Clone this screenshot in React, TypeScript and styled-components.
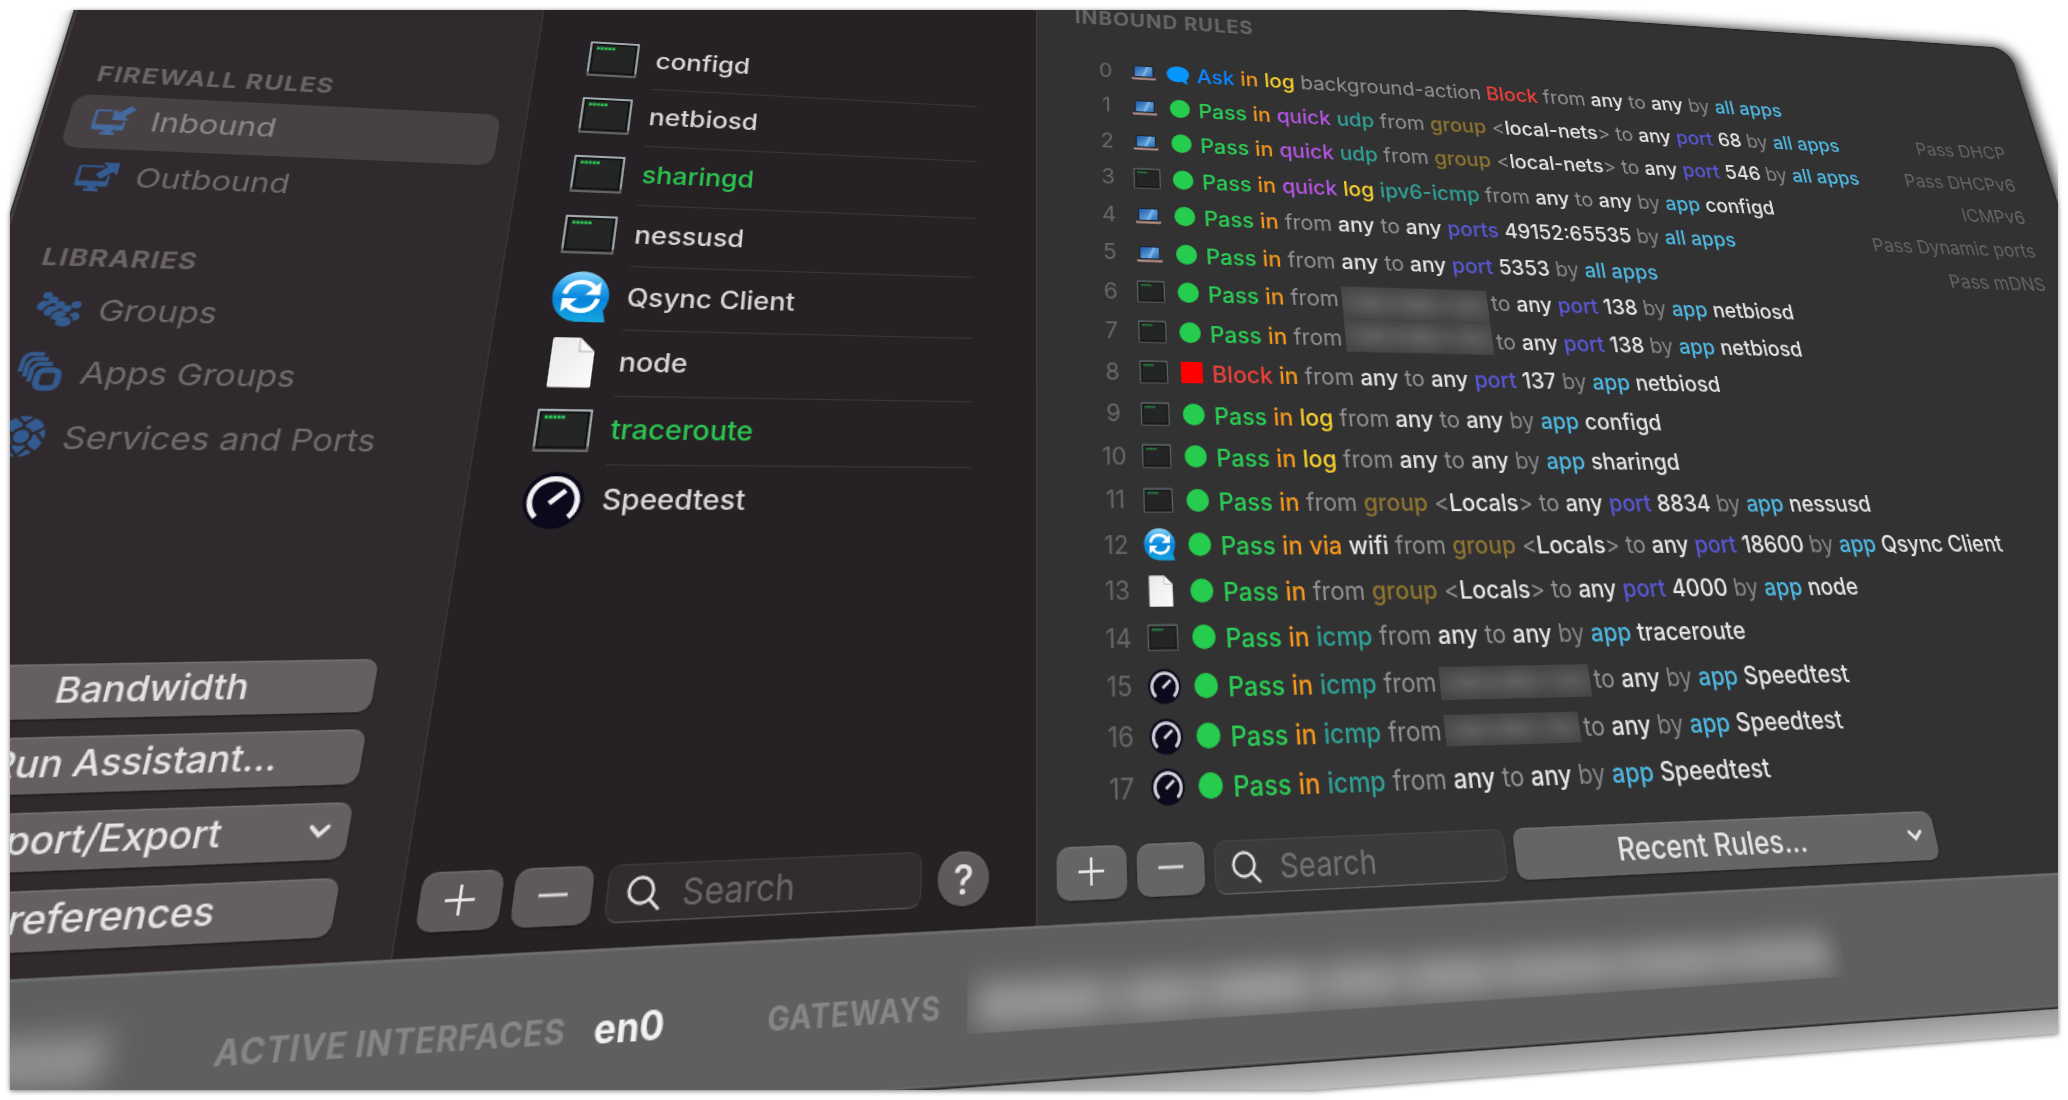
import React from "react";
import styled, { createGlobalStyle, css } from "styled-components";

const GlobalStyle = createGlobalStyle`
  html, body { margin: 0; padding: 0; background: #fff; }
  body { overflow: hidden; font-family: Inter, "Liberation Sans", sans-serif; }
  * { box-sizing: border-box; }
`;

const Page = styled.main`
  width: 2068px;
  height: 1100px;
  padding: 10px;
  background: #fff;
`;

const Lift = styled.div`
  width: 2048px;
  height: 1080px;
  filter: drop-shadow(0 1px 2.5px rgba(0, 0, 0, 0.55));
`;

const Crop = styled.div`
  width: 100%;
  height: 100%;
  overflow: hidden;
`;

/* The crop frame starts 10px in, so the projection is taken about the page origin. */
const Projection = styled.div`
  width: 1945px;
  height: 969px;
  transform-origin: 0 0;
  transform: translate(-10px, -10px)
    matrix3d(
      1.1338, 0.067545, 0, 0.000129149,
      -0.290805, 0.855574, 0, -0.0002807,
      0, 0, 1, 0,
      1036, -20, 0, 1
    )
    translate(-832px, 0);
  clip-path: inset(-40px -60px 0 -40px);
`;

const Window = styled.div`
  position: relative;
  display: flex;
  flex-direction: column;
  width: 1945px;
  height: 951px;
  border-radius: 24px 24px 0 0;
  overflow: hidden;
  background: #323232;
  &::after {
    content: "";
    position: absolute;
    inset: 0;
    border-radius: 24px 24px 0 0;
    box-shadow: inset 0 0 0 1.5px #262626, inset 2.5px -2.5px 0 0 rgba(140, 140, 140, 0.45);
  }
`;

const WindowShadow = styled.div`
  border-radius: 24px 24px 0 0;
  box-shadow: 7px -1px 17px rgba(0, 0, 0, 0.55);
`;

const Floor = styled.div`
  position: relative;
  height: 18px;
  margin-right: -60px;
  background: linear-gradient(#969696, #bdbdbd);
`;

const Body = styled.div`
  display: grid;
  grid-template-columns: 377.6px 454.4px 1fr;
  height: 848px;
`;

const Sidebar = styled.aside`
  display: flex;
  flex-direction: column;
  padding: 139.5px 20.6px 16.5px 21px;
  background: #30292d;
`;

const GroupTitle = styled.h2`
  margin: 0;
  padding: 0 0 2px 11.5px;
  height: 40px;
  line-height: 39px;
  font-size: 20.4px;
  font-weight: 700;
  letter-spacing: 0.95px;
  color: #6b6467;
`;

const NavGroup = styled.nav`
  display: flex;
  flex-direction: column;
  gap: 2px;
  margin-bottom: 26.3px;
`;

const NavItem = styled.a<{ $active?: boolean }>`
  display: flex;
  align-items: center;
  gap: 12.8px;
  height: 50px;
  padding: 0 0 2.5px 16.5px;
  border-radius: 12px;
  font-size: 24.9px;
  color: ${(p) => (p.$active ? "#8d878a" : "#716b6e")};
  background: ${(p) => (p.$active ? "#484144" : "transparent")};
  --cut: ${(p) => (p.$active ? "#484144" : "#30292d")};
  svg {
    flex: none;
    width: 33px;
    height: 33px;
    color: ${(p) => (p.$active ? "#456aa0" : "#335b8f")};
  }
`;

const SideActions = styled.div`
  display: flex;
  flex-direction: column;
  gap: 12px;
  margin: auto 20.8px 0 17px;
`;

const buttonFace = css<{ $tone?: "warm" | "mid" | "grey" }>`
  height: 38.5px;
  border: 0;
  border-radius: 9px;
  font-family: inherit;
  color: #e6e4e5;
  background: ${(p) => (p.$tone === "grey" ? "#656565" : p.$tone === "mid" ? "#5e595c" : "#655f62")};
  box-shadow: inset 0 1.2px 0 rgba(255, 255, 255, 0.1), 0 1px 1.5px rgba(0, 0, 0, 0.35);
`;

const WideButton = styled.button<{ $tone?: "warm" | "mid" | "grey"; $size?: number; $menu?: boolean }>`
  ${buttonFace}
  display: flex;
  align-items: center;
  padding: 0 ${(p) => (p.$menu ? 12 : 0)}px 0 0;
  height: 38px;
  font-size: ${(p) => p.$size ?? 24.8}px;
  font-weight: 500;
  span {
    flex: 1;
    text-align: center;
    padding: 0 ${(p) => (p.$menu ? 6 : 0)}px 1px 0;
  }
  svg {
    flex: none;
    width: 15px;
    height: 10px;
  }
`;

const RecentButton = styled(WideButton)`
  flex: 1;
  height: 39px;
`;

const SquareButton = styled.button<{ $tone?: "warm" | "mid" | "grey" }>`
  ${buttonFace}
  flex: none;
  display: grid;
  place-items: center;
  width: 54.6px;
  padding: 0;
  border-radius: 10px;
  svg {
    width: 22px;
    height: 22px;
    margin-top: -1px;
  }
`;

const RoundButton = styled(SquareButton)`
  width: 38.5px;
  margin: 0.8px 0 0 4px;
  border-radius: 50%;
  font-size: 29px;
  font-weight: 500;
`;

const Toolbar = styled.div<{ $side: "apps" | "rules" }>`
  display: flex;
  gap: 8px;
  margin-top: auto;
  padding: ${(p) => (p.$side === "apps" ? "0 36px 15.6px 12.5px" : "0 328px 15.4px 15px")};
`;

const SearchBox = styled.label<{ $grey?: boolean }>`
  flex: ${(p) => (p.$grey ? "0 0 244.5px" : "1")};
  display: flex;
  align-items: center;
  gap: 15px;
  height: 39px;
  margin-left: ${(p) => (p.$grey ? 0 : 1.8)}px;
  padding: 1px 0 0 13px;
  border-radius: 9px;
  border: 1px solid ${(p) => (p.$grey ? "#464646" : "#3f393c")};
  border-bottom-color: ${(p) => (p.$grey ? "#626262" : "#585255")};
  background: ${(p) => (p.$grey ? "#3b3b3b" : "#322b2f")};
  color: ${(p) => (p.$grey ? "#747474" : "#6c666a")};
  font-size: 24.3px;
  svg {
    width: 24px;
    height: 24px;
    color: #e4e2e3;
  }
`;

const AppsPanel = styled.section`
  display: flex;
  flex-direction: column;
  padding-top: 88.5px;
  border-left: 1.5px solid #3b3639;
  background: #262124;
`;

const AppList = styled.ul`
  list-style: none;
  margin: 0;
  padding: 0 56px 0 41.5px;
`;

const AppRow = styled.li<{ $live?: boolean }>`
  display: grid;
  grid-template-columns: 48px 1fr;
  column-gap: 13.4px;
  height: 58px;
  font-size: 22.9px;
  font-weight: 500;
  color: ${(p) => (p.$live ? "#2bc650" : "#dad8d9")};
`;

const AppIconCell = styled.span`
  display: grid;
  place-items: center;
  svg {
    width: 47px;
    height: 47px;
  }
`;

const AppName = styled.span`
  display: flex;
  align-items: center;
  border-bottom: 1.5px solid #3a3538;
  li:last-child > & {
    border-bottom-color: transparent;
  }
`;

const RulesPanel = styled.section`
  display: flex;
  flex-direction: column;
  border-left: 1.5px solid #414041;
  background: #323232;
`;

const RulesTitle = styled.h2`
  margin: 0;
  padding: 19.5px 0 0 37.5px;
  height: 79px;
  line-height: 40px;
  font-size: 21px;
  font-weight: 700;
  letter-spacing: 0.9px;
  color: #656565;
`;

const RuleList = styled.ol`
  list-style: none;
  margin: 0;
  padding: 0 47.5px 0 48.5px;
`;

const RuleRow = styled.li`
  display: grid;
  grid-template-columns: 38px 38px 31px 1fr auto;
  align-items: center;
  height: 38.53px;
  font-size: 21.4px;
  white-space: nowrap;
`;

const RuleNumber = styled.span`
  text-align: center;
  font-size: 21px;
  color: #686868;
`;

const RuleIcon = styled.span`
  display: grid;
  place-items: center;
  svg {
    width: 28px;
    height: 28px;
  }
`;

const Mark = styled.span<{ $kind: "pass" | "block" | "ask" }>`
  display: grid;
  place-items: center;
  justify-self: center;
  width: 20px;
  height: 20px;
  border-radius: ${(p) => (p.$kind === "pass" ? "50%" : "0")};
  background: ${(p) => (p.$kind === "pass" ? "#26cc4e" : p.$kind === "block" ? "#ff0000" : "transparent")};
  svg {
    width: 23px;
    height: 23px;
    margin-left: -2px;
  }
`;

const RuleText = styled.span`
  padding: 2px 0 0 3px;
`;

const inks: Record<string, string> = {
  A: "#0a84ff",
  P: "#2bcf55",
  B: "#ec413a",
  i: "#f7981d",
  l: "#f6cf2c",
  q: "#b455e2",
  t: "#2fa098",
  f: "#929296",
  g: "#8f7430",
  w: "#e6e6e6",
  o: "#5957d6",
  y: "#85858a",
  a: "#4fb8e3",
};

const Word = styled.span<{ $ink: string }>`
  color: ${(p) => inks[p.$ink]};
  font-weight: ${(p) => ("fy".includes(p.$ink) ? 400 : 500)};
`;

const Redacted = styled.span<{ $w: number; $h: number; $drop: number }>`
  display: inline-block;
  vertical-align: middle;
  width: ${(p) => p.$w}px;
  height: ${(p) => p.$h}px;
  margin: -8px 4px -8px 3px;
  transform: translateY(${(p) => p.$drop}px);
  background:
    radial-gradient(ellipse 24% 50% at 19% 50%, #5f5f5f, transparent),
    radial-gradient(ellipse 26% 50% at 51% 50%, #616161, transparent),
    radial-gradient(ellipse 22% 50% at 86% 50%, #5c5c5c, transparent),
    #474747;
`;

const Note = styled.span`
  font-size: 20.7px;
  color: #646464;
`;

const StatusBar = styled.footer`
  display: flex;
  align-items: center;
  height: 103px;
  border-top: 2px solid #6d6d6d;
  background: #5f5f5f;
  font-size: 21px;
`;

const StatusLabel = styled.span<{ $gap: number }>`
  margin: -2px 0 0 ${(p) => p.$gap}px;
  font-weight: 700;
  letter-spacing: 0.6px;
  color: #868686;
`;

const StatusValue = styled.span`
  margin: -3.5px 0 0 19px;
  font-size: 25px;
  font-weight: 700;
  color: #f2f2f2;
`;

const StatusBlur = styled.span<{ $w: number; $gap: number }>`
  display: flex;
  align-items: center;
  justify-content: ${(p) => (p.$gap ? "flex-start" : "flex-end")};
  width: ${(p) => p.$w}px;
  height: 58px;
  margin-left: ${(p) => p.$gap}px;
  margin-top: -26px;
  overflow: hidden;
  padding-top: 22px;
`;

const Smudge = styled.span<{ $w: number; $right?: number }>`
  flex: none;
  width: ${(p) => p.$w}px;
  height: 28px;
  margin-right: ${(p) => p.$right ?? 0}px;
  margin-left: 6px;
  filter: blur(10px);
  background: linear-gradient(
    90deg,
    #9a9a9a 0 12%,
    #848484 14% 15%,
    #999999 18% 22%,
    #878787 24%,
    #9e9e9e 28% 35%,
    #828282 37%,
    #989898 40% 45%,
    #868686 47%,
    #999999 50% 56%,
    #898989 58%,
    #969696 61% 70%,
    #8b8b8b 73%,
    #969696 77% 84%,
    #8c8c8c 86%,
    #969696 90%
  );
`;

const Plus = () => (
  <svg viewBox="0 0 22 22" fill="none" stroke="currentColor" strokeWidth="2">
    <path d="M11 1v20M1 11h20" />
  </svg>
);
const Minus = () => (
  <svg viewBox="0 0 22 22" fill="none" stroke="currentColor" strokeWidth="2">
    <path d="M1 10.500h20" />
  </svg>
);
const Lens = () => (
  <svg viewBox="0 0 24 24" fill="none" stroke="currentColor" strokeWidth="2.2" strokeLinecap="round">
    <circle cx="10" cy="10" r="8.6" />
    <path d="M16.5 16.5l6 6" />
  </svg>
);
const Chevron = () => (
  <svg viewBox="0 0 15 10" fill="none" stroke="currentColor" strokeWidth="2.8" strokeLinecap="round">
    <path d="M2 2l5.5 5.5L13 2" />
  </svg>
);

const Monitor = ({ out }: { out?: boolean }) => (
  <svg viewBox="0 0 33 33" fill="currentColor">
    <path
      d="M3 6.500h23v17.500a1.500 1.500 0 0 1-1.500 1.500h-7V27.500h2.500V30h-11v-2.500h2.500v-2H3A1.500 1.500 0 0 1 1.500 24V8a1.500 1.500 0 0 1 1.500-1.500zM3.800 8.300v12.200h20.400V8.300z"
      fillRule="evenodd"
    />
    {out ? (
      <path
        stroke="var(--cut)"
        strokeWidth="2.400"
        paintOrder="stroke"
        d="M18.500 3.500H31v11.500l-3.600-3.200-7.800 7-4.600-4.200 7.600-7.200z"
      />
    ) : (
      <path
        stroke="var(--cut)"
        strokeWidth="2.400"
        paintOrder="stroke"
        d="M27.500 2l4.300 3.800-7.300 6.200 4 4H15.500V5.500l4.200 3.600z"
      />
    )}
  </svg>
);

const GroupsIcon = () => (
  <svg viewBox="0 0 33 33" fill="currentColor">
    <ellipse cx="6.500" cy="5.800" rx="3.400" ry="3" />
    <ellipse cx="11.500" cy="9.600" rx="3.400" ry="3" />
    <ellipse cx="17" cy="13.500" rx="3.600" ry="3.200" />
    <ellipse cx="22.500" cy="16.500" rx="3.200" ry="3" />
    <ellipse cx="28.500" cy="13" rx="3.600" ry="3" />
    <path d="M1 16c0-3.800 2-5.800 5-5.800s3.600 1.200 4.400 3c-3 1-4 2.600-4.600 5.200-3-.2-4.800-1-4.800-2.400z" />
    <path d="M7 20.500c0-3.800 2-5.800 5-5.800s3.600 1.200 4.400 3c-3 1-4 2.600-4.600 5.200-3-.2-4.800-1-4.800-2.400z" />
    <path d="M13 24.500c0-3.800 2.200-6 5.500-6s4 1.500 4.800 3.200c-2.600.8-3.600 2-4 4.500-3.500 0-6.300-.3-6.300-1.700z" />
    <path d="M17 29c0-3.600 2.300-5.500 5.500-5.500S28 25.500 28 29c-1 1.600-2.800 2.400-5.500 2.400S18 30.600 17 29z" />
    <path d="M25.500 21.500c1-1.500 2.200-2.300 4-2.300 2.200 0 3.500 2 3.500 5-.8 1.500-2.200 2-4 2-.5-2-1.600-3.600-3.500-4.700z" />
  </svg>
);

const StackIcon = () => (
  <svg viewBox="0 0 33 33" fill="none" stroke="currentColor" strokeWidth="3.300">
    <path d="M2.800 17V8a5.500 5.500 0 0 1 5.500-5.500h8" />
    <path d="M6.600 21V12a5.500 5.500 0 0 1 5.500-5.500h8" />
    <path d="M10.400 25V16a5.500 5.500 0 0 1 5.500-5.500h8" />
    <rect x="15.500" y="15.500" width="14.500" height="14.500" rx="4.500" strokeWidth="4.600" />
  </svg>
);

const GlobeIcon = () => (
  <svg viewBox="0 0 33 33">
    <circle cx="16.500" cy="16.500" r="16" fill="currentColor" />
    <g fill="none" stroke="#30292d" strokeWidth="2.200">
      <circle cx="16.500" cy="16.500" r="6.400" />
      <path d="M16.500 10.100V6.500M22.600 14.700l3.400-1.500M20.400 21.600l2.200 3.200M12.600 21.600l-2.200 3.200M10.400 14.700L7 13.200" />
      <path d="M10 1l6.500 5.500L23 1M31.500 9L26 13.200l6 7M27.500 28.500l-4.900-3.700-6 7-6.200-7L5 29M1 20.500l6-7.300L2.500 7" />
    </g>
  </svg>
);

const ExecIcon = ({ small }: { small?: boolean }) => (
  <svg viewBox="0 0 47 47">
    <rect x="2" y="6" width="43" height="35.500" rx="1" fill={small ? "#677073" : "#a3adb1"} />
    <rect x="2" y="37.500" width="43" height="4" fill={small ? "#4c4c4c" : "#666"} />
    <rect x="3.800" y="8" width="39.400" height="31.600" fill="#101010" />
    <rect x="5.600" y="9.500" width="35.800" height="28" fill="#242625" />
    <path
      d="M8 12.800h16"
      stroke={small ? "#2a8a45" : "#2fc653"}
      strokeWidth="2.800"
      strokeDasharray="2.600 0.700"
    />
  </svg>
);

const SyncIcon = () => (
  <svg viewBox="0 0 47 47">
    <defs>
      <linearGradient id="sync" x1="0" y1="0" x2="0" y2="1">
        <stop offset="0" stopColor="#8fd6f8" />
        <stop offset=".3" stopColor="#2ba4ea" />
        <stop offset=".55" stopColor="#0583dc" />
        <stop offset="1" stopColor="#17a6e0" />
      </linearGradient>
    </defs>
    <path fill="url(#sync)" d="M23 .5c12.700 0 23 10 23 22.500 0 5-1.300 9-3.600 12.500L45 46H23C10 46 .5 35.500.5 23S10.300.5 23 .5z" />
    <g fill="none" stroke="#fff" strokeWidth="4">
      <path d="M10 21c1.500-7 6.500-11 13-11 5 0 8.500 2 11 5.500" />
      <path d="M37 25c-1.500 7-6.500 11-13 11-5 0-8.500-2-11-5.500" />
    </g>
    <path fill="#fff" d="M38.500 9.500v12H26.500zM8.500 37V25h12z" />
  </svg>
);

const DocIcon = () => (
  <svg viewBox="0 0 47 47">
    <defs>
      <linearGradient id="doc" x1="0" y1="0" x2="1" y2="1">
        <stop offset="0" stopColor="#e9e9e9" />
        <stop offset="1" stopColor="#fbfbfb" />
      </linearGradient>
    </defs>
    <path fill="url(#doc)" d="M8 2h20l12 12v30a1.500 1.500 0 0 1-1.500 1.500h-31A1.500 1.500 0 0 1 6 44V4a2 2 0 0 1 2-2z" />
    <path fill="#c9c9c9" d="M27 2v11.500a1.500 1.500 0 0 0 1.500 1.500H40z" />
    <path fill="#f6f6f6" d="M28.500 3v9a1.500 1.500 0 0 0 1.500 1.500h9z" />
  </svg>
);

const SpeedIcon = ({ small }: { small?: boolean }) => (
  <svg viewBox="0 0 47 47">
    <circle cx="23.500" cy="23.500" r="23" fill="#0b0a1d" />
    <g fill="none" stroke={small ? "#d4d4da" : "#f1f1f4"}>
      <path d="M11 37a18 18 0 1 1 25 0" strokeWidth="4.200" />
      <path d="M20.500 26l11.500-10.500" strokeWidth="4" />
    </g>
  </svg>
);

const LaptopIcon = () => (
  <svg viewBox="0 0 28 28">
    <defs>
      <linearGradient id="lap" x1="0" y1="0" x2="1" y2="1">
        <stop offset="0" stopColor="#1d5aa8" />
        <stop offset=".6" stopColor="#5a9ad6" />
        <stop offset="1" stopColor="#2a66ae" />
      </linearGradient>
    </defs>
    <rect x="4" y="7" width="20" height="13" rx="1.200" fill="#1b2430" />
    <rect x="5.200" y="8" width="17.600" height="11" fill="url(#lap)" />
    <path d="M17 8h3l-5 11h-3z" fill="#8fc0ea" opacity=".7" />
    <path d="M1.500 20.500h25l-1 2.200h-23z" fill="#b58f84" />
  </svg>
);

const BubbleIcon = () => (
  <svg viewBox="0 0 24 24">
    <path
      fill="#0795ff"
      d="M12 1.500C5.400 1.500.3 5.600.3 10.800S5.400 20 12 20c1.600 0 3-.2 4.300-.6 1.600 1.400 3.600 2.500 6 2.700-1-1.300-1.700-3-1.800-4.800 2-1.700 3.200-3.900 3.200-6.500C23.700 5.600 18.600 1.500 12 1.500z"
    />
  </svg>
);

type AppKind = "exec" | "sync" | "doc" | "speed" | "laptop";

const AppIcon = ({ kind, small }: { kind: AppKind; small?: boolean }) => {
  if (kind === "exec") return <ExecIcon small={small} />;
  if (kind === "sync") return <SyncIcon />;
  if (kind === "doc") return <DocIcon />;
  if (kind === "speed") return <SpeedIcon small={small} />;
  return <LaptopIcon />;
};

const apps: { name: string; kind: AppKind; live?: boolean }[] = [
  { name: "configd", kind: "exec" },
  { name: "netbiosd", kind: "exec" },
  { name: "sharingd", kind: "exec", live: true },
  { name: "nessusd", kind: "exec" },
  { name: "Qsync Client", kind: "sync" },
  { name: "node", kind: "doc" },
  { name: "traceroute", kind: "exec", live: true },
  { name: "Speedtest", kind: "speed" },
];

/* Rule text: "ink:words" segments split by "|", "+" glues to the next one;
   "#width,height,drop" stands for a redacted address. */
const rules: { kind: AppKind; mark: "ask" | "pass" | "block"; text: string; note?: string }[] = [
  { kind: "laptop", mark: "ask", text: "A:Ask|i:in|l:log|f:background-action|B:Block|f:from|w:any|f:to|w:any|y:by|a:all apps" },
  { kind: "laptop", mark: "pass", text: "P:Pass|i:in|q:quick|t:udp|f:from|g:group|f:<+|w:local-nets+|f:>|f:to|w:any|o:port|w:68|y:by|a:all apps", note: "Pass DHCP" },
  { kind: "laptop", mark: "pass", text: "P:Pass|i:in|q:quick|t:udp|f:from|g:group|f:<+|w:local-nets+|f:>|f:to|w:any|o:port|w:546|y:by|a:all apps", note: "Pass DHCPv6" },
  { kind: "exec", mark: "pass", text: "P:Pass|i:in|q:quick|l:log|t:ipv6-icmp|f:from|w:any|f:to|w:any|y:by|a:app|w:configd", note: "ICMPv6" },
  { kind: "laptop", mark: "pass", text: "P:Pass|i:in|f:from|w:any|f:to|w:any|o:ports|w:49152:65535|y:by|a:all apps", note: "Pass Dynamic ports" },
  { kind: "laptop", mark: "pass", text: "P:Pass|i:in|f:from|w:any|f:to|w:any|o:port|w:5353|y:by|a:all apps", note: "Pass mDNS" },
  { kind: "exec", mark: "pass", text: "P:Pass|i:in|f:from+|#146,33.4,1.7|f:to|w:any|o:port|w:138|y:by|a:app|w:netbiosd" },
  { kind: "exec", mark: "pass", text: "P:Pass|i:in|f:from+|#146,32,-4.3|f:to|w:any|o:port|w:138|y:by|a:app|w:netbiosd" },
  { kind: "exec", mark: "block", text: "B:Block|i:in|f:from|w:any|f:to|w:any|o:port|w:137|y:by|a:app|w:netbiosd" },
  { kind: "exec", mark: "pass", text: "P:Pass|i:in|l:log|f:from|w:any|f:to|w:any|y:by|a:app|w:configd" },
  { kind: "exec", mark: "pass", text: "P:Pass|i:in|l:log|f:from|w:any|f:to|w:any|y:by|a:app|w:sharingd" },
  { kind: "exec", mark: "pass", text: "P:Pass|i:in|f:from|g:group|f:<+|w:Locals+|f:>|f:to|w:any|o:port|w:8834|y:by|a:app|w:nessusd" },
  { kind: "sync", mark: "pass", text: "P:Pass|i:in|i:via|w:wifi|f:from|g:group|f:<+|w:Locals+|f:>|f:to|w:any|o:port|w:18600|y:by|a:app|w:Qsync Client" },
  { kind: "doc", mark: "pass", text: "P:Pass|i:in|f:from|g:group|f:<+|w:Locals+|f:>|f:to|w:any|o:port|w:4000|y:by|a:app|w:node" },
  { kind: "exec", mark: "pass", text: "P:Pass|i:in|t:icmp|f:from|w:any|f:to|w:any|y:by|a:app|w:traceroute" },
  { kind: "speed", mark: "pass", text: "P:Pass|i:in|t:icmp|f:from+|#138,27,-1|f:to|w:any|y:by|a:app|w:Speedtest" },
  { kind: "speed", mark: "pass", text: "P:Pass|i:in|t:icmp|f:from+|#122,25,-1|f:to|w:any|y:by|a:app|w:Speedtest" },
  { kind: "speed", mark: "pass", text: "P:Pass|i:in|t:icmp|f:from|w:any|f:to|w:any|y:by|a:app|w:Speedtest" },
];

const RuleSentence = ({ text }: { text: string }) => (
  <RuleText>
    {text.split("|").map((part, i) => {
      if (part[0] === "#") {
        const [w, h, drop] = part.slice(1).split(",").map(Number);
        return <Redacted key={i} $w={w} $h={h} $drop={drop} />;
      }
      const glued = part.endsWith("+");
      return (
        <React.Fragment key={i}>
          <Word $ink={part[0]}>{glued ? part.slice(2, -1) : part.slice(2)}</Word>
          {glued ? "" : " "}
        </React.Fragment>
      );
    })}
  </RuleText>
);

export default function App() {
  return (
    <Page>
      <GlobalStyle />
      <Lift>
        <Crop>
          <Projection>
            <WindowShadow>
              <Window>
                <Body>
                  <Sidebar>
                    <GroupTitle>FIREWALL RULES</GroupTitle>
                    <NavGroup>
                      <NavItem $active>
                        <Monitor />
                        Inbound
                      </NavItem>
                      <NavItem>
                        <Monitor out />
                        Outbound
                      </NavItem>
                    </NavGroup>
                    <GroupTitle>LIBRARIES</GroupTitle>
                    <NavGroup>
                      <NavItem>
                        <GroupsIcon />
                        Groups
                      </NavItem>
                      <NavItem>
                        <StackIcon />
                        Apps Groups
                      </NavItem>
                      <NavItem>
                        <GlobeIcon />
                        Services and Ports
                      </NavItem>
                    </NavGroup>
                    <SideActions>
                      <WideButton>
                        <span>Bandwidth</span>
                      </WideButton>
                      <WideButton>
                        <span>Run Assistant...</span>
                      </WideButton>
                      <WideButton $menu>
                        <span>Import/Export</span>
                        <Chevron />
                      </WideButton>
                      <WideButton>
                        <span>Preferences</span>
                      </WideButton>
                    </SideActions>
                  </Sidebar>
                  <AppsPanel>
                    <AppList>
                      {apps.map((app) => (
                        <AppRow key={app.name} $live={app.live}>
                          <AppIconCell>
                            <AppIcon kind={app.kind} />
                          </AppIconCell>
                          <AppName>{app.name}</AppName>
                        </AppRow>
                      ))}
                    </AppList>
                    <Toolbar $side="apps">
                      <SquareButton $tone="mid">
                        <Plus />
                      </SquareButton>
                      <SquareButton $tone="mid">
                        <Minus />
                      </SquareButton>
                      <SearchBox>
                        <Lens />
                        Search
                      </SearchBox>
                      <RoundButton $tone="mid">?</RoundButton>
                    </Toolbar>
                  </AppsPanel>
                  <RulesPanel>
                    <RulesTitle>INBOUND RULES</RulesTitle>
                    <RuleList>
                      {rules.map((rule, i) => (
                        <RuleRow key={i}>
                          <RuleNumber>{i}</RuleNumber>
                          <RuleIcon>
                            <AppIcon kind={rule.kind} small />
                          </RuleIcon>
                          <Mark $kind={rule.mark}>{rule.mark === "ask" && <BubbleIcon />}</Mark>
                          <RuleSentence text={rule.text} />
                          {rule.note && <Note>{rule.note}</Note>}
                        </RuleRow>
                      ))}
                    </RuleList>
                    <Toolbar $side="rules">
                      <SquareButton $tone="grey">
                        <Plus />
                      </SquareButton>
                      <SquareButton $tone="grey">
                        <Minus />
                      </SquareButton>
                      <SearchBox $grey>
                        <Lens />
                        Search
                      </SearchBox>
                      <RecentButton $tone="grey" $size={24.6} $menu>
                        <span>Recent Rules...</span>
                        <Chevron />
                      </RecentButton>
                    </Toolbar>
                  </RulesPanel>
                </Body>
                <StatusBar>
                  <StatusBlur $w={240} $gap={0}>
                    <Smudge $w={222} $right={30} />
                  </StatusBlur>
                  <StatusLabel $gap={37}>ACTIVE INTERFACES</StatusLabel>
                  <StatusValue>en0</StatusValue>
                  <StatusLabel $gap={71}>GATEWAYS</StatusLabel>
                  <StatusBlur $w={724} $gap={19}>
                    <Smudge $w={706} />
                  </StatusBlur>
                </StatusBar>
              </Window>
            </WindowShadow>
            <Floor />
          </Projection>
        </Crop>
      </Lift>
    </Page>
  );
}
